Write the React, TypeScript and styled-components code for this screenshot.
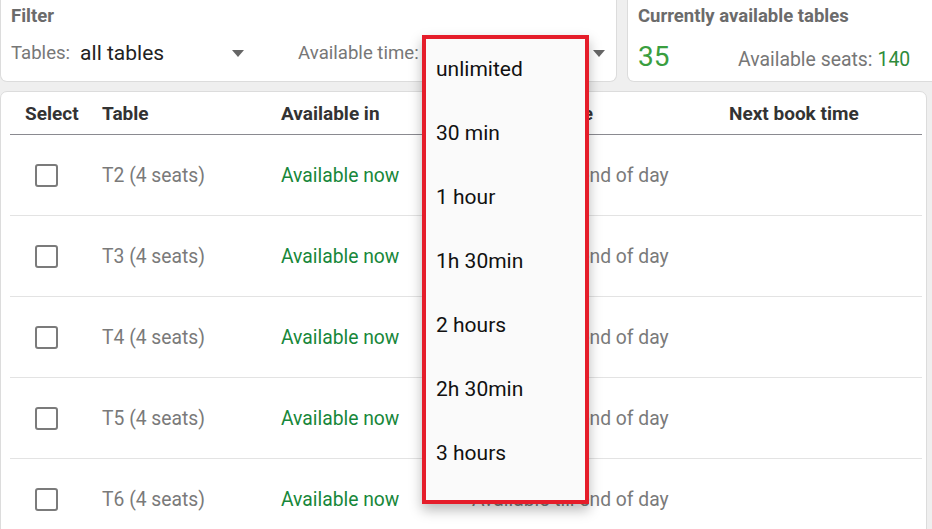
import React from "react";
import styled, { createGlobalStyle } from "styled-components";

const Global = createGlobalStyle`
  html, body { margin: 0; padding: 0; background: #efefef; }
  body { font-family: Roboto, "Noto Sans", sans-serif; overflow: hidden; }
  * { box-sizing: border-box; }
`;

const Page = styled.div`
  position: relative;
  width: 932px;
  height: 529px;
  overflow: hidden;
  background: #efefef;
`;

const TopRow = styled.div`
  display: flex;
  gap: 10px;
  height: 82px;
`;

const Card = styled.div<{ $w?: number }>`
  background: #fff;
  border: 1px solid #dcdcdc;
  border-top: none;
  border-radius: 0 0 7px 7px;
  ${(p) => (p.$w ? `width: ${p.$w}px;` : "flex: 1;")}
  padding: 5px 10px 0 10px;
  margin-right: ${(p) => (p.$w ? 0 : -6)}px;
`;

const CardTitle = styled.div`
  font-size: 18.5px;
  font-weight: 700;
  color: #6b6b6b;
  line-height: 22px;
`;

const FilterRow = styled.div`
  display: flex;
  align-items: center;
  margin-top: 13px;
  height: 26px;
`;

const Label = styled.span<{ $ml?: number }>`
  font-size: 18.6px;
  color: #777;
  margin-left: ${(p) => p.$ml ?? 0}px;
`;

const Value = styled.span<{ $w: number }>`
  font-size: 21px;
  color: #222;
  margin-left: 10px;
  width: ${(p) => p.$w}px;
`;

const Caret = styled.span`
  width: 0;
  height: 0;
  border-left: 6.5px solid transparent;
  border-right: 6.5px solid transparent;
  border-top: 7px solid #666;
`;

const StatsRow = styled.div`
  display: flex;
  align-items: baseline;
  margin-top: 13px;
`;

const BigNumber = styled.span`
  font-size: 28px;
  color: #3a9e3f;
  width: 100px;
`;

const SeatsLabel = styled.span`
  font-size: 19.4px;
  color: #777;
`;

const SeatsValue = styled.span`
  font-size: 19.4px;
  color: #2e8b3a;
  margin-left: 5px;
`;

const TableCard = styled.div`
  margin-top: 9px;
  width: 927px;
  height: 450px;
  background: #fff;
  border: 1px solid #dcdcdc;
  border-radius: 7px;
  padding: 0 4px 0 9px;
`;

const cols = "77px 179px 191px 257px 1fr";

const HeadRow = styled.div`
  display: grid;
  grid-template-columns: ${cols};
  align-items: center;
  height: 43px;
  padding-left: 15px;
  border-bottom: 1px solid #8a8a90;
`;

const HeadCell = styled.div`
  font-size: 19px;
  font-weight: 700;
  color: #333;
  white-space: nowrap;
`;

const Row = styled.div`
  display: grid;
  grid-template-columns: ${cols};
  align-items: center;
  height: 81px;
  padding-left: 15px;
  border-bottom: 1px solid #e3e3e3;
`;

const Cell = styled.div<{ $tone?: "green" | "gray" }>`
  font-size: 19.3px;
  white-space: nowrap;
  color: ${(p) => (p.$tone === "green" ? "#17873a" : "#7a7a7a")};
`;

const Checkbox = styled.div`
  width: 23px;
  height: 23px;
  margin-left: 10px;
  border: 2.5px solid #7b7b7b;
  border-radius: 3px;
`;

const Menu = styled.div`
  position: absolute;
  left: 422px;
  top: 35px;
  width: 167px;
  height: 469px;
  background: #fafafa;
  border: 4px solid #e51d2a;
  box-shadow: 0 6px 12px rgba(0, 0, 0, 0.28);
`;

const MenuItem = styled.div`
  height: 64px;
  display: flex;
  align-items: center;
  padding: 0 0 4px 10px;
  font-size: 21px;
  color: #111;
`;

const rows = ["T2", "T3", "T4", "T5", "T6"];
const options = ["unlimited", "30 min", "1 hour", "1h 30min", "2 hours", "2h 30min", "3 hours"];

export default function App() {
  return (
    <Page>
      <Global />
      <TopRow>
        <Card $w={617}>
          <CardTitle>Filter</CardTitle>
          <FilterRow>
            <Label>Tables:</Label>
            <Value $w={152}>all tables</Value>
            <Caret />
            <Label $ml={54}>Available time:</Label>
            <Value $w={164}>unlimited</Value>
            <Caret />
          </FilterRow>
        </Card>
        <Card>
          <CardTitle>Currently available tables</CardTitle>
          <StatsRow>
            <BigNumber>35</BigNumber>
            <SeatsLabel>Available seats:</SeatsLabel>
            <SeatsValue>140</SeatsValue>
          </StatsRow>
        </Card>
      </TopRow>
      <TableCard>
        <HeadRow>
          <HeadCell>Select</HeadCell>
          <HeadCell>Table</HeadCell>
          <HeadCell>Available in</HeadCell>
          <HeadCell>Available time</HeadCell>
          <HeadCell>Next book time</HeadCell>
        </HeadRow>
        {rows.map((r) => (
          <Row key={r}>
            <Checkbox />
            <Cell>{r} (4 seats)</Cell>
            <Cell $tone="green">Available now</Cell>
            <Cell>Available till end of day</Cell>
            <Cell />
          </Row>
        ))}
      </TableCard>
      <Menu>
        {options.map((o) => (
          <MenuItem key={o}>{o}</MenuItem>
        ))}
      </Menu>
    </Page>
  );
}
